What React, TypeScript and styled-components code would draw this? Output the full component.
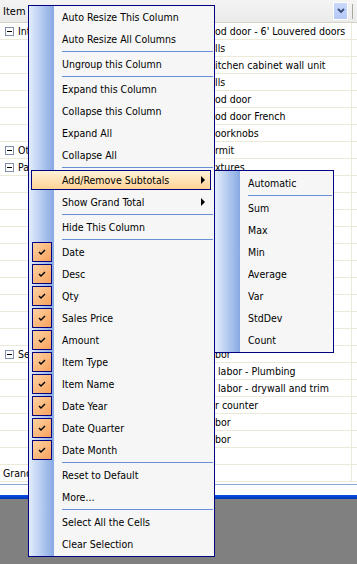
import React from 'react';
import styled, { createGlobalStyle } from 'styled-components';

const GlobalStyle = createGlobalStyle`
  html, body {
    margin: 0;
    padding: 0;
    background: #808080;
  }
  body {
    font-family: 'DejaVu Sans Condensed', 'DejaVu Sans', Tahoma, sans-serif;
    font-size: 10.5px;
    color: #000;
  }
`;

const Page = styled.div`
  position: relative;
  width: 357px;
  height: 564px;
  overflow: hidden;
  background: #808080;
`;

const Grid = styled.div`
  display: flex;
  flex-direction: column;
  background: #fff;
`;

const Header = styled.div`
  display: grid;
  grid-template-columns: 1fr 19px 5px;
  align-items: center;
  height: 22px;
  background: linear-gradient(#f4f4f4, #ebebeb);
  border-bottom: 1px solid #d6d3c6;
`;

const HeaderLabel = styled.div`
  padding-left: 3px;
  font-size: 11px;
`;

const DropButton = styled.div`
  width: 15px;
  height: 18px;
  box-sizing: border-box;
  border: 1px solid #fff;
  background: linear-gradient(#c9d9fb, #b4c9f6);
  display: flex;
  align-items: center;
  justify-content: center;
`;

const HeaderSep = styled.div`
  width: 1px;
  height: 15px;
  background: #aca899;
`;

const Row = styled.div`
  display: grid;
  grid-template-columns: 215px 137px 1fr;
  height: 17px;
  box-sizing: border-box;
  border-bottom: 1px solid #ebe9d8;
`;

const TreeCell = styled.div<{ $indent?: boolean }>`
  display: flex;
  align-items: center;
  gap: 4px;
  padding-left: ${(p) => (p.$indent ? '5px' : '3px')};
  white-space: nowrap;
  font-size: 10.5px;
`;

const ValueCell = styled.div`
  display: flex;
  align-items: center;
  white-space: pre;
  overflow: hidden;
  font-size: 10.5px;
  border-right: 1px solid #ebe9d8;
`;

const Expander = styled.span`
  width: 9px;
  height: 9px;
  box-sizing: border-box;
  border: 1px solid #7f8fa9;
  background: #fff;
  display: inline-flex;
  align-items: center;
  justify-content: center;
  &::after {
    content: '';
    width: 5px;
    height: 1px;
    background: #000;
  }
`;

const GridEnd = styled.div`
  height: 2px;
  background: #fff;
  border-bottom: 1px solid #8ca6d2;
`;

const Gap = styled.div`
  height: 10px;
  background: #fff;
`;

const BlueBar = styled.div`
  height: 4px;
  background: linear-gradient(#0c4fe6, #0036b8);
`;

const Menu = styled.div<{ $left: number; $top: number; $width: number; $padTop: number }>`
  position: absolute;
  left: ${(p) => p.$left}px;
  top: ${(p) => p.$top}px;
  width: ${(p) => p.$width}px;
  box-sizing: border-box;
  border: 1px solid #000080;
  padding: ${(p) => p.$padTop}px 0 1px;
  background: linear-gradient(to right, #e3edfc, #87a9e2) 0 0 / 25px 100% no-repeat, #f6f6f6;
  display: flex;
  flex-direction: column;
`;

const Item = styled.div<{ $active?: boolean }>`
  position: relative;
  display: flex;
  align-items: center;
  height: ${(p) => (p.$active ? '20px' : '22px')};
  box-sizing: border-box;
  margin: ${(p) => (p.$active ? '1px 3px 1px 2px' : '0 3px 0 2px')};
  border: 1px solid ${(p) => (p.$active ? '#000080' : 'transparent')};
  background: ${(p) => (p.$active ? 'linear-gradient(#fff2d8, #ffd394)' : 'transparent')};
  white-space: nowrap;
`;

const IconSlot = styled.div`
  width: 30px;
  height: 20px;
  flex: none;
  display: flex;
  align-items: center;
`;

const Check = styled.div`
  width: 20px;
  height: 20px;
  box-sizing: border-box;
  border: 1px solid #000080;
  background: linear-gradient(135deg, #ffd2a2, #f7a25e);
  display: flex;
  align-items: center;
  justify-content: center;
`;

const Arrow = styled.span`
  position: absolute;
  right: 5px;
  top: 50%;
  margin-top: -4px;
  width: 0;
  height: 0;
  border-top: 4px solid transparent;
  border-bottom: 4px solid transparent;
  border-left: 4px solid #000;
`;

const Separator = styled.div`
  height: 3px;
  display: flex;
  align-items: center;
  margin: 0 1px 0 33px;
  &::after {
    content: '';
    flex: 1;
    height: 1px;
    background: #6a8ed6;
  }
`;

type Entry = { label: string; checked?: boolean; sub?: boolean; active?: boolean } | 'sep';

const mainMenu: Entry[] = [
  { label: 'Auto Resize This Column' },
  { label: 'Auto Resize All Columns' },
  'sep',
  { label: 'Ungroup this Column' },
  'sep',
  { label: 'Expand this Column' },
  { label: 'Collapse this Column' },
  { label: 'Expand All' },
  { label: 'Collapse All' },
  'sep',
  { label: 'Add/Remove Subtotals', sub: true, active: true },
  { label: 'Show Grand Total', sub: true },
  'sep',
  { label: 'Hide This Column' },
  'sep',
  { label: 'Date', checked: true },
  { label: 'Desc', checked: true },
  { label: 'Qty', checked: true },
  { label: 'Sales Price', checked: true },
  { label: 'Amount', checked: true },
  { label: 'Item Type', checked: true },
  { label: 'Item Name', checked: true },
  { label: 'Date Year', checked: true },
  { label: 'Date Quarter', checked: true },
  { label: 'Date Month', checked: true },
  'sep',
  { label: 'Reset to Default' },
  { label: 'More...' },
  'sep',
  { label: 'Select All the Cells' },
  { label: 'Clear Selection' },
];

const subMenu: Entry[] = [
  { label: 'Automatic' },
  'sep',
  { label: 'Sum' },
  { label: 'Max' },
  { label: 'Min' },
  { label: 'Average' },
  { label: 'Var' },
  { label: 'StdDev' },
  { label: 'Count' },
];

const rows: { tree?: string; group?: boolean; value?: string }[] = [
  { tree: 'Interior', group: true, value: "od door - 6' Louvered doors" },
  { value: 'lls' },
  { value: 'itchen cabinet wall unit' },
  { value: 'lls' },
  { value: 'od door' },
  { value: 'od door French' },
  { value: 'oorknobs' },
  { tree: 'Other', group: true, value: 'rmit' },
  { tree: 'Parts', group: true, value: 'xtures' },
  {}, {}, {}, {}, {}, {}, {}, {}, {}, {},
  { tree: 'Service', group: true, value: 'bor' },
  { value: ' labor - Plumbing' },
  { value: ' labor - drywall and trim' },
  { value: 'r counter' },
  { value: 'bor' },
  { value: 'bor' },
  {},
  { tree: 'Grand Total' },
];

const CheckMark = () => (
  <svg width="8" height="7" viewBox="0 0 8 7">
    <polyline points="1,3 3,5 7,1" fill="none" stroke="#000" strokeWidth="1.4" />
  </svg>
);

const Chevron = () => (
  <svg width="8" height="6" viewBox="0 0 8 6">
    <polyline points="1,1 4,4 7,1" fill="none" stroke="#3b4d75" strokeWidth="1.8" />
  </svg>
);

const MenuList: React.FC<{ entries: Entry[] }> = ({ entries }) => (
  <>
    {entries.map((e, i) =>
      e === 'sep' ? (
        <Separator key={i} />
      ) : (
        <Item key={i} $active={e.active}>
          <IconSlot>
            {e.checked && (
              <Check>
                <CheckMark />
              </Check>
            )}
          </IconSlot>
          {e.label}
          {e.sub && <Arrow />}
        </Item>
      )
    )}
  </>
);

const App: React.FC = () => {
  return (
    <Page>
      <GlobalStyle />
      <Grid>
        <Header>
          <HeaderLabel>Item</HeaderLabel>
          <DropButton>
            <Chevron />
          </DropButton>
          <HeaderSep />
        </Header>
        {rows.map((r, i) => (
          <Row key={i}>
            <TreeCell $indent={r.group}>
              {r.group && <Expander />}
              {r.tree}
            </TreeCell>
            <ValueCell>{r.value}</ValueCell>
            <div />
          </Row>
        ))}
        <GridEnd />
        <Gap />
        <BlueBar />
      </Grid>

      <Menu $left={28} $top={5} $width={187} $padTop={0}>
        <MenuList entries={mainMenu} />
      </Menu>
      <Menu $left={214} $top={170} $width={120} $padTop={1}>
        <MenuList entries={subMenu} />
      </Menu>
    </Page>
  );
};

export default App;
